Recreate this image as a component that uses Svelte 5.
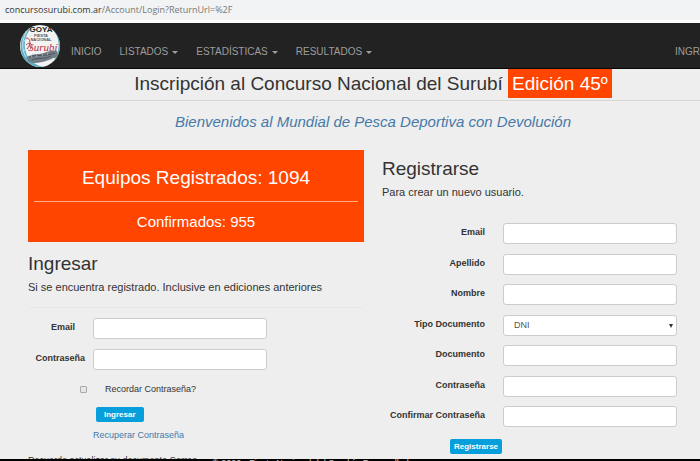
<script lang="ts">
	const menus = ["LISTADOS", "ESTADÍSTICAS", "RESULTADOS"];

	let login = $state({ email: "", password: "", remember: false });
	let user = $state({
		email: "",
		apellido: "",
		nombre: "",
		tipo: "DNI",
		documento: "",
		password: "",
		confirm: ""
	});

	function onSubmit(e: SubmitEvent) {
		e.preventDefault();
	}
</script>

<div class="page">
	<div class="address">
		<span class="host">concursosurubi.com.ar</span><span>/Account/Login?ReturnUrl=%2F</span>
	</div>

	<nav>
		<a class="logo" href="/" aria-label="Fiesta Nacional del Surubí">
			<svg viewBox="0 0 42 44" width="42" height="44">
				<defs>
					<clipPath id="badge"><ellipse cx="21" cy="22" rx="20" ry="21" /></clipPath>
				</defs>
				<ellipse cx="21" cy="22" rx="20" ry="21" fill="#f3f3f3" />
				<g clip-path="url(#badge)">
					<path d="M13 3C3 8-1 20 3 31s14 15 21 12c-9-2-17-9-18-19S9 8 13 3z" fill="#62afc5" />
					<path d="M8 7C3 15 2 25 7 33M5 17c4-2 5-5 8-6M4 27c4-1 4-5 7-6" fill="none" stroke="#c5e5ed" stroke-width="1" />
					<path d="M37 8c5 8 5 20-1 28" fill="none" stroke="#58a9b8" stroke-width="2" />
					<path d="M8 33c3-2 7-3 12-3 7-1 12-5 18-3l2 6c-6 0-10 4-17 5-5 1-10 2-14-1z" fill="#737d85" />
					<path d="M10 33c7-3 15 0 26-4M13 36c7-3 12 0 19-4" fill="none" stroke="#4c555e" stroke-width="1" />
					<path d="M12 32h1m4 0h1m5-1h1m4-1h1" stroke="#d6d8db" stroke-width="1" />
				</g>
				<text x="22" y="8" class="goya">GOYA</text>
				<text x="22" y="13" class="fiesta">FIESTA</text>
				<text x="22" y="17" class="fiesta">NACIONAL</text>
				<text x="24" y="27" class="surubi">Surubí</text>
				<path d="M7 14c5 0 5 7 1 11M7 21c5-5 8 2 4 4" fill="none" stroke="#be4050" stroke-width="1" />
			</svg>
		</a>
		<a href="/">INICIO</a>
		{#each menus as menu}
			<a href="/">{menu}<i class="caret"></i></a>
		{/each}
		<a class="sign-in" href="/">INGR</a>
	</nav>

	<main>
		<h1>Inscripción al Concurso Nacional del Surubí <span>Edición 45º</span></h1>
		<p class="welcome">Bienvenidos al Mundial de Pesca Deportiva con Devolución</p>

		<div class="columns">
			<section>
				<div class="teams">
					<div class="total">Equipos Registrados: 1094</div>
					<div class="confirmed">Confirmados: 955</div>
				</div>
				<h2>Ingresar</h2>
				<p>Si se encuentra registrado. Inclusive en ediciones anteriores</p>
				<form class="login" onsubmit={onSubmit}>
					<div class="fields">
						<div class="field">
							<label class="short" for="login-email">Email</label>
							<input id="login-email" type="text" bind:value={login.email} />
						</div>
						<div class="field">
							<label for="login-password">Contraseña</label>
							<input id="login-password" type="password" bind:value={login.password} />
						</div>
					</div>
					<div class="remember">
						<input id="remember" type="checkbox" bind:checked={login.remember} />
						<label for="remember">Recordar Contraseña?</label>
					</div>
					<button>Ingresar</button>
					<a href="/">Recuperar Contraseña</a>
				</form>
			</section>

			<section class="register">
				<h2>Registrarse</h2>
				<p>Para crear un nuevo usuario.</p>
				<form onsubmit={onSubmit}>
					<div class="fields">
						<div class="field">
							<label for="email">Email</label>
							<input id="email" type="text" bind:value={user.email} />
						</div>
						<div class="field">
							<label for="apellido">Apellido</label>
							<input id="apellido" type="text" bind:value={user.apellido} />
						</div>
						<div class="field">
							<label for="nombre">Nombre</label>
							<input id="nombre" type="text" bind:value={user.nombre} />
						</div>
						<div class="field">
							<label for="tipo">Tipo Documento</label>
							<div class="select">
								<select id="tipo" bind:value={user.tipo}>
									<option>DNI</option>
								</select>
								<i class="arrow"></i>
							</div>
						</div>
						<div class="field">
							<label for="documento">Documento</label>
							<input id="documento" type="text" bind:value={user.documento} />
						</div>
						<div class="field">
							<label for="password">Contraseña</label>
							<input id="password" type="password" bind:value={user.password} />
						</div>
						<div class="field">
							<label for="confirm">Confirmar Contraseña</label>
							<input id="confirm" type="password" bind:value={user.confirm} />
						</div>
					</div>
					<button>Registrarse</button>
				</form>
			</section>
		</div>
	</main>
	<p class="notice">Recuerde actualizar su documento Correo</p>
	<footer>© 2020 - Fiesta Nacional del Surubí - Desarrollado por</footer>
</div>

<style>
	:global(body) {
		background: #eee;
	}

	.page {
		font-family: "Liberation Sans", Arial, sans-serif;
		font-size: 9px;
		color: #333;
		overflow: hidden;
	}

	.address {
		box-sizing: border-box;
		height: 23px;
		padding-left: 5px;
		background: #f1f3f4;
		border-bottom: 3px solid #fdfdfd;
		font-family: "Open Sans", sans-serif;
		font-size: 9px;
		line-height: 19px;
		color: #777;
	}

	.host {
		color: #333;
	}

	nav {
		display: flex;
		align-items: center;
		box-sizing: border-box;
		height: 46px;
		padding-left: 19px;
		background: #222;
		border-bottom: 1px solid #080808;
		overflow: hidden;
		white-space: nowrap;
	}

	nav a {
		padding-top: 13px;
		margin-right: 18px;
		font-size: 10px;
		line-height: 12px;
		color: #9d9d9d;
		text-decoration: none;
	}

	nav .logo {
		padding: 0;
		margin-right: 10px;
		line-height: 0;
	}

	nav .sign-in {
		margin-left: auto;
		margin-right: 0;
	}

	.goya {
		font: bold 8px "Liberation Sans", sans-serif;
		text-anchor: middle;
		fill: #222;
	}

	.fiesta {
		font: bold 4px "Liberation Sans", sans-serif;
		text-anchor: middle;
		fill: #555;
	}

	.surubi {
		font: italic 11px "Liberation Serif", serif;
		text-anchor: middle;
		fill: #b82f43;
	}

	.caret {
		display: inline-block;
		margin-left: 4px;
		vertical-align: middle;
		border-top: 3px solid #9d9d9d;
		border-left: 3px solid transparent;
		border-right: 3px solid transparent;
	}

	/* the container runs past the right edge of the window */
	main {
		margin-right: -18px;
		padding-left: 28px;
	}

	h1 {
		margin: 0;
		padding-bottom: 2px;
		border-bottom: 1px solid #d5d5d5;
		font-size: 19px;
		font-weight: normal;
		line-height: 29px;
		text-align: center;
	}

	h1 span {
		display: inline-block;
		padding: 0 4px;
		background: #ff4500;
		color: #fff;
	}

	.welcome {
		margin: 11px 0 18px;
		font-size: 15px;
		font-style: italic;
		line-height: 20px;
		text-align: center;
		color: #4679a8;
	}

	.columns {
		display: grid;
		grid-template-columns: 1fr 1fr;
		gap: 18px;
	}

	.teams {
		padding: 12px 6px 9px;
		background: #ff4500;
		color: #fff;
		text-align: center;
	}

	.total {
		padding-bottom: 7px;
		border-bottom: 1px solid #ffae87;
		font-size: 19px;
		line-height: 32px;
	}

	.confirmed {
		padding-top: 9px;
		font-size: 15px;
		line-height: 22px;
	}

	h2 {
		margin: 10px 0 3px;
		font-size: 19px;
		font-weight: normal;
		line-height: 24px;
	}

	section > p {
		margin: 0;
		font-size: 11px;
		line-height: 16px;
	}

	.login {
		margin-top: 12px;
		padding-top: 10px;
		border-top: 1px solid #e8e8e8;
	}

	.fields {
		display: flex;
		flex-direction: column;
		gap: 10px;
	}

	.field {
		display: flex;
		align-items: flex-start;
	}

	.field label {
		flex: none;
		box-sizing: border-box;
		width: 65px;
		padding-right: 8px;
		font-weight: bold;
		line-height: 19px;
		text-align: right;
	}

	.field .short {
		padding-right: 18px;
	}

	input,
	select {
		box-sizing: border-box;
		width: 174px;
		height: 21px;
		margin: 0;
		padding: 0 10px;
		background: #fff;
		border: 1px solid #ccc;
		border-radius: 3px;
		font: inherit;
		color: #555;
	}

	.select {
		position: relative;
	}

	select {
		display: block;
		appearance: none;
	}

	.arrow {
		position: absolute;
		top: 9px;
		right: 4px;
		border-top: 4px solid #333;
		border-left: 2px solid transparent;
		border-right: 2px solid transparent;
	}

	.remember {
		display: flex;
		align-items: center;
		gap: 18px;
		margin: 12px 0 11px 52px;
		line-height: 14px;
	}

	.remember input {
		appearance: none;
		width: 7px;
		height: 7px;
		padding: 0;
		background: #e6e6e6;
		border-color: #aaa;
		border-radius: 1px;
	}

	button {
		display: block;
		height: 15px;
		padding: 0 8px;
		background: #069edb;
		border: 0;
		border-radius: 2px;
		font: bold 8px "Liberation Sans", Arial, sans-serif;
		color: #fff;
	}

	.login button {
		margin: 0 0 6px 68px;
	}

	.login a {
		display: block;
		margin-left: 65px;
		line-height: 14px;
		color: #4679a8;
		text-decoration: none;
	}

	.register h2 {
		margin: 7px 0 3px;
	}

	.register form {
		margin-top: 23px;
	}

	.register .fields {
		justify-content: space-between;
		gap: 0;
		height: 204px;
	}

	.register .field label {
		width: 121px;
		padding-right: 18px;
	}

	.register button {
		margin: 12px 0 2px 68px;
		padding: 0 4px;
	}

	.notice {
		height: 3px;
		margin: 0;
		padding-left: 28px;
		overflow: hidden;
		line-height: 8px;
	}

	footer {
		height: 2px;
		padding-left: 212px;
		background: #000;
		color: #ccc;
		line-height: 8px;
		overflow: hidden;
	}
</style>
